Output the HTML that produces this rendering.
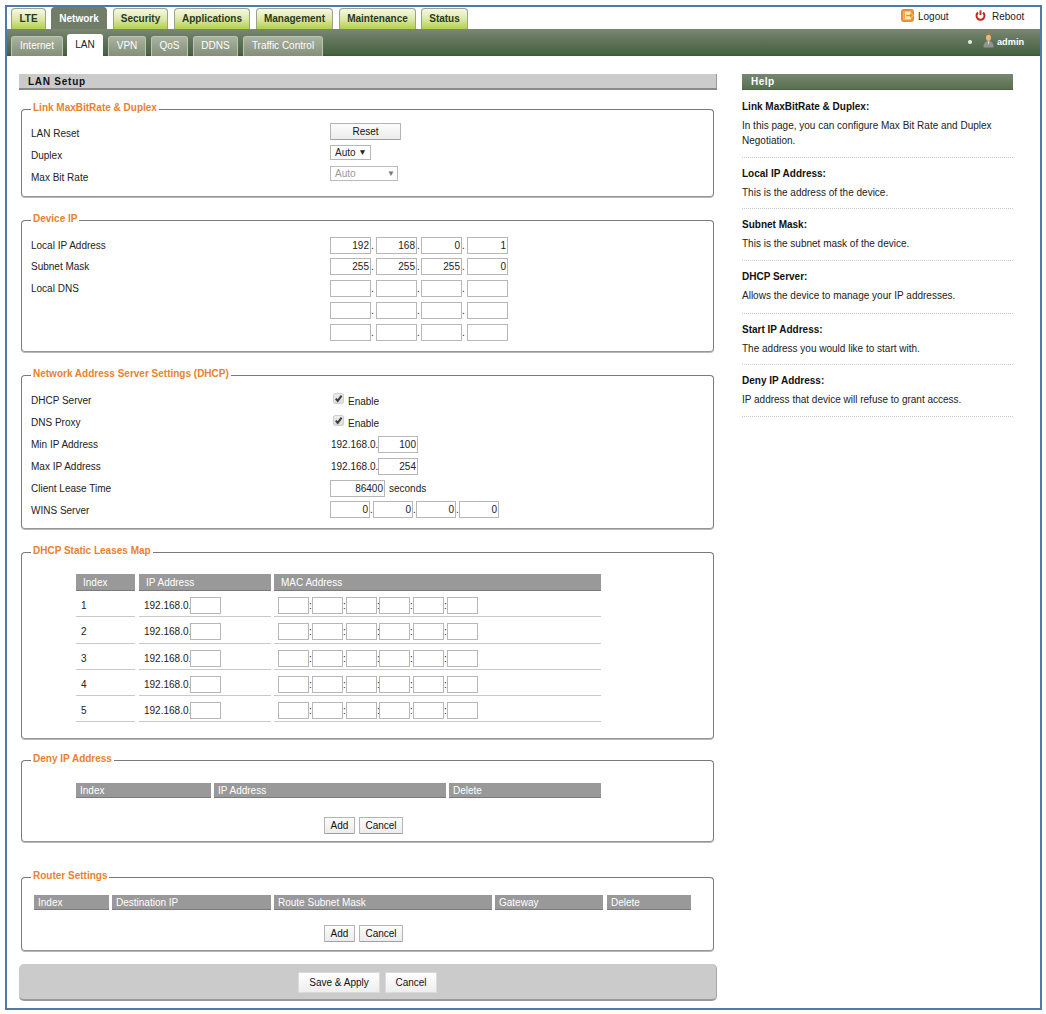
<!DOCTYPE html><html><head><meta charset="utf-8"><style>
*{box-sizing:border-box;margin:0;padding:0}
html,body{width:1046px;height:1014px;background:#fff;overflow:hidden}
body{position:relative;font-family:"Liberation Sans",sans-serif;font-size:10px;color:#222}
.a,.t,.tb,.lg,div{position:absolute}
.t{white-space:nowrap;line-height:12px;font-size:10px;color:#222}
.tb{white-space:nowrap;line-height:12px;font-size:10px;font-weight:bold;color:#222}
.lg{white-space:nowrap;line-height:12px;font-size:10px;font-weight:bold;color:#e8822e;background:#fff;padding:0 2px}
.frame{border:2px solid #4e79a8}
.tab{border:1px solid #98a38a;border-bottom:none;border-radius:4px 4px 0 0;background:linear-gradient(#f6f8e6,#dde8a8 50%,#b2cf48);font-weight:bold;color:#2a3a20;text-align:center;line-height:20px}
.tab.on{background:#717c69;border-color:#717c69;color:#fff}
.bar{background:linear-gradient(#7b8771,#5f7359 45%,#4a6444 90%,#3d5638)}
.stab{border:1px solid #bcc4b2;border-bottom:none;border-radius:3px 3px 0 0;background:linear-gradient(#aab3a0,#96a08c 50%,#84907c);color:#fff;text-align:center;line-height:17px}
.stab.on{background:#fff;color:#222;border-color:#fff}
.sec{background:#cbcbcb;border-bottom:2px solid #8a8a8a;border-right:1px solid #9a9a9a}
.help{background:linear-gradient(#778770,#57704f);border-bottom:1px solid #4d6048}
.fs{border:1px solid #7a7a7a;border-bottom-color:#959595;border-radius:4px;box-shadow:0 1px 0 #b8b8b8}
.in{border:1px solid #b7b7b7;background:#fff;text-align:right;padding-right:1px;line-height:14px;font-size:10px;color:#222}
.btn{border:1px solid #b4b4b4;border-bottom-color:#a0a0a0;border-radius:1px;background:linear-gradient(#fcfcfc,#ececec);text-align:center;font-size:10px;color:#111}
.th{background:#999;border-bottom:1px solid #7a7a7a;color:#fff;line-height:17px;padding-left:4px;white-space:nowrap}
.rl{height:1px;background:#c9c9c9}
.sep{height:1px;border-top:1px dotted #c8c8c8}
</style></head><body>
<div class="frame" style="left:5px;top:5px;width:1037px;height:1005px;"></div>
<div class="tab" style="left:11px;top:8px;width:35px;height:21px;">LTE</div>
<div class="tab on" style="left:51px;top:7px;width:56px;height:22px;line-height:21px">Network</div>
<div class="tab" style="left:113px;top:8px;width:55px;height:21px;">Security</div>
<div class="tab" style="left:174px;top:8px;width:76px;height:21px;">Applications</div>
<div class="tab" style="left:256px;top:8px;width:77px;height:21px;">Management</div>
<div class="tab" style="left:339px;top:8px;width:77px;height:21px;">Maintenance</div>
<div class="tab" style="left:421px;top:8px;width:47px;height:21px;">Status</div>
<div class="bar" style="left:7px;top:29px;width:1033px;height:27px;"></div>
<div class="stab" style="left:11px;top:36px;width:52px;height:20px;">Internet</div>
<div class="stab on" style="left:67px;top:34px;width:36px;height:22px;line-height:20px">LAN</div>
<div class="stab" style="left:108px;top:36px;width:38px;height:20px;">VPN</div>
<div class="stab" style="left:151px;top:36px;width:37px;height:20px;">QoS</div>
<div class="stab" style="left:193px;top:36px;width:45px;height:20px;">DDNS</div>
<div class="stab" style="left:243px;top:36px;width:80px;height:20px;">Traffic Control</div>
<svg style="position:absolute;left:901px;top:9px" width="13" height="13" viewBox="0 0 13 13"><rect x="0.5" y="0.5" width="12" height="12" rx="2" fill="#e9943c" stroke="#de8a34"/><rect x="2.5" y="2.5" width="7.5" height="8" fill="#fde8a8"/><rect x="2.5" y="2.5" width="1.5" height="8" fill="#f2a848"/><path d="M5 5.4h4V3.6l3.4 2.9L9 9.4V7.6H5z" fill="#f08a1c" stroke="#fde8a8" stroke-width="0.7"/></svg>
<span class="t" style="left:918px;top:11px;">Logout</span>
<svg style="position:absolute;left:975px;top:10px" width="11" height="11" viewBox="0 0 11 11"><path d="M3 2.6A4 4 0 1 0 8 2.6" stroke="#c4281d" stroke-width="2" fill="none"/><path d="M5.5 0.3v4.7" stroke="#c4281d" stroke-width="1.9"/></svg>
<span class="t" style="left:992px;top:11px;">Reboot</span>
<div style="left:968px;top:41px;width:4px;height:4px;border-radius:2px;background:#e8ece4;margin-top:-1px"></div>
<svg style="position:absolute;left:983px;top:33px" width="11" height="15" viewBox="0 0 11 15"><path d="M3 4.5C3 1.5 4 0.5 5.5 0.5S8 1.5 8 4.5C8 7 7 8 5.5 8S3 7 3 4.5z" fill="#e9b878"/><path d="M2.8 3.5C3 1 4.2 0.3 5.5 0.3S8 1 8.2 3.5C7.5 2.2 6.5 2 5.5 2S3.5 2.2 2.8 3.5z" fill="#a8703a"/><path d="M0.5 14.5C0.5 10 2 8.3 5.5 8.3S10.5 10 10.5 14.5z" fill="#8f948c"/><path d="M4.6 8.4l.9 3.6.9-3.6z" fill="#e8e8e0"/></svg>
<span class="tb" style="left:997px;top:36px;color:#fff;font-size:9.2px">admin</span>
<div class="sec" style="left:19px;top:74px;width:698px;height:16px;"></div>
<span class="tb" style="left:28px;top:76px;font-size:10px;letter-spacing:0.75px;color:#111">LAN Setup</span>
<div class="help" style="left:742px;top:74px;width:271px;height:16px;"></div>
<span class="tb" style="left:751px;top:76px;color:#fff;letter-spacing:0.5px">Help</span>
<div class="fs" style="left:21px;top:109px;width:693px;height:88px;"></div>
<span class="lg" style="left:31px;top:102px;">Link MaxBitRate &amp; Duplex</span>
<div class="fs" style="left:21px;top:220px;width:693px;height:132px;"></div>
<span class="lg" style="left:31px;top:213px;">Device IP</span>
<div class="fs" style="left:21px;top:375px;width:693px;height:154px;"></div>
<span class="lg" style="left:31px;top:368px;">Network Address Server Settings (DHCP)</span>
<div class="fs" style="left:21px;top:552px;width:693px;height:187px;"></div>
<span class="lg" style="left:31px;top:545px;">DHCP Static Leases Map</span>
<div class="fs" style="left:21px;top:760px;width:693px;height:82px;"></div>
<span class="lg" style="left:31px;top:753px;">Deny IP Address</span>
<div class="fs" style="left:21px;top:877px;width:693px;height:74px;"></div>
<span class="lg" style="left:31px;top:870px;">Router Settings</span>
<span class="t" style="left:31px;top:128px;">LAN Reset</span>
<span class="t" style="left:31px;top:150px;">Duplex</span>
<span class="t" style="left:31px;top:172px;">Max Bit Rate</span>
<div class="btn" style="left:330px;top:123px;width:71px;height:17px;line-height:15px">Reset</div>
<div class="in" style="left:330px;top:145px;width:41px;height:15px;text-align:left;padding-left:4px;line-height:13px">Auto <span style="font-size:8.5px;position:relative;top:-1px">&#9660;</span></div>
<div class="in" style="left:330px;top:166px;width:68px;height:15px;text-align:left;padding-left:4px;line-height:13px;color:#999;border-color:#bbb">Auto<span style="position:absolute;left:56px;top:0;font-size:8px;color:#777">&#9660;</span></div>
<span class="t" style="left:31px;top:240px;">Local IP Address</span>
<span class="t" style="left:31px;top:261px;">Subnet Mask</span>
<span class="t" style="left:31px;top:283px;">Local DNS</span>
<div class="in" style="left:330px;top:237px;width:41px;height:17px;line-height:15px">192</div>
<span class="t" style="left:371px;top:240px;">.</span>
<div class="in" style="left:376px;top:237px;width:41px;height:17px;line-height:15px">168</div>
<span class="t" style="left:417px;top:240px;">.</span>
<div class="in" style="left:421px;top:237px;width:41px;height:17px;line-height:15px">0</div>
<span class="t" style="left:462px;top:240px;">.</span>
<div class="in" style="left:467px;top:237px;width:41px;height:17px;line-height:15px">1</div>
<div class="in" style="left:330px;top:258px;width:41px;height:17px;line-height:15px">255</div>
<span class="t" style="left:371px;top:261px;">.</span>
<div class="in" style="left:376px;top:258px;width:41px;height:17px;line-height:15px">255</div>
<span class="t" style="left:417px;top:261px;">.</span>
<div class="in" style="left:421px;top:258px;width:41px;height:17px;line-height:15px">255</div>
<span class="t" style="left:462px;top:261px;">.</span>
<div class="in" style="left:467px;top:258px;width:41px;height:17px;line-height:15px">0</div>
<div class="in" style="left:330px;top:280px;width:41px;height:17px;line-height:15px"></div>
<span class="t" style="left:371px;top:283px;">.</span>
<div class="in" style="left:376px;top:280px;width:41px;height:17px;line-height:15px"></div>
<span class="t" style="left:417px;top:283px;">.</span>
<div class="in" style="left:421px;top:280px;width:41px;height:17px;line-height:15px"></div>
<span class="t" style="left:462px;top:283px;">.</span>
<div class="in" style="left:467px;top:280px;width:41px;height:17px;line-height:15px"></div>
<div class="in" style="left:330px;top:302px;width:41px;height:17px;line-height:15px"></div>
<span class="t" style="left:371px;top:305px;">.</span>
<div class="in" style="left:376px;top:302px;width:41px;height:17px;line-height:15px"></div>
<span class="t" style="left:417px;top:305px;">.</span>
<div class="in" style="left:421px;top:302px;width:41px;height:17px;line-height:15px"></div>
<span class="t" style="left:462px;top:305px;">.</span>
<div class="in" style="left:467px;top:302px;width:41px;height:17px;line-height:15px"></div>
<div class="in" style="left:330px;top:324px;width:41px;height:17px;line-height:15px"></div>
<span class="t" style="left:371px;top:327px;">.</span>
<div class="in" style="left:376px;top:324px;width:41px;height:17px;line-height:15px"></div>
<span class="t" style="left:417px;top:327px;">.</span>
<div class="in" style="left:421px;top:324px;width:41px;height:17px;line-height:15px"></div>
<span class="t" style="left:462px;top:327px;">.</span>
<div class="in" style="left:467px;top:324px;width:41px;height:17px;line-height:15px"></div>
<span class="t" style="left:31px;top:395px;">DHCP Server</span>
<span class="t" style="left:31px;top:417px;">DNS Proxy</span>
<span class="t" style="left:31px;top:439px;">Min IP Address</span>
<span class="t" style="left:31px;top:461px;">Max IP Address</span>
<span class="t" style="left:31px;top:483px;">Client Lease Time</span>
<span class="t" style="left:31px;top:505px;">WINS Server</span>
<div style="left:333px;top:393px;width:11px;height:11px;border:1px solid #d0d0d0;border-radius:2px;background:linear-gradient(#ececec,#dcdcdc)"><svg style="position:absolute;left:0;top:0" width="9" height="9" viewBox="0 0 9 9"><path d="M1.8 4.6l1.9 2.2L7.6 1.6" stroke="#3c3c3c" stroke-width="2" fill="none"/></svg></div>
<span class="t" style="left:348px;top:395.5px;">Enable</span>
<div style="left:333px;top:415px;width:11px;height:11px;border:1px solid #d0d0d0;border-radius:2px;background:linear-gradient(#ececec,#dcdcdc)"><svg style="position:absolute;left:0;top:0" width="9" height="9" viewBox="0 0 9 9"><path d="M1.8 4.6l1.9 2.2L7.6 1.6" stroke="#3c3c3c" stroke-width="2" fill="none"/></svg></div>
<span class="t" style="left:348px;top:417.5px;">Enable</span>
<span class="t" style="left:331px;top:439px;">192.168.0.</span>
<div class="in" style="left:378px;top:436px;width:40px;height:17px;line-height:15px">100</div>
<span class="t" style="left:331px;top:461px;">192.168.0.</span>
<div class="in" style="left:378px;top:458px;width:40px;height:17px;line-height:15px">254</div>
<div class="in" style="left:330px;top:480px;width:55px;height:17px;line-height:15px">86400</div>
<span class="t" style="left:389px;top:482.5px;">seconds</span>
<div class="in" style="left:330px;top:501px;width:40px;height:17px;line-height:15px">0</div>
<span class="t" style="left:370px;top:504px;">.</span>
<div class="in" style="left:373px;top:501px;width:40px;height:17px;line-height:15px">0</div>
<span class="t" style="left:413px;top:504px;">.</span>
<div class="in" style="left:416px;top:501px;width:40px;height:17px;line-height:15px">0</div>
<span class="t" style="left:456px;top:504px;">.</span>
<div class="in" style="left:459px;top:501px;width:40px;height:17px;line-height:15px">0</div>
<div class="th" style="left:76px;top:574px;width:59px;height:17px;padding-left:7px">Index</div>
<div class="th" style="left:139px;top:574px;width:132px;height:17px;padding-left:7px">IP Address</div>
<div class="th" style="left:274px;top:574px;width:327px;height:17px;padding-left:7px">MAC Address</div>
<div class="rl" style="left:76px;top:616px;width:59px"></div>
<div class="rl" style="left:139px;top:616px;width:132px"></div>
<div class="rl" style="left:274px;top:616px;width:327px"></div>
<span class="t" style="left:81px;top:600px;">1</span>
<span class="t" style="left:144px;top:600px;">192.168.0.</span>
<div class="in" style="left:190px;top:597px;width:31px;height:17px;"></div>
<div class="in" style="left:278px;top:597px;width:31px;height:17px;"></div>
<span class="t" style="left:309px;top:600px;">:</span>
<div class="in" style="left:312px;top:597px;width:31px;height:17px;"></div>
<span class="t" style="left:343px;top:600px;">:</span>
<div class="in" style="left:346px;top:597px;width:31px;height:17px;"></div>
<span class="t" style="left:377px;top:600px;">:</span>
<div class="in" style="left:379px;top:597px;width:31px;height:17px;"></div>
<span class="t" style="left:410px;top:600px;">:</span>
<div class="in" style="left:413px;top:597px;width:31px;height:17px;"></div>
<span class="t" style="left:444px;top:600px;">:</span>
<div class="in" style="left:447px;top:597px;width:31px;height:17px;"></div>
<div class="rl" style="left:76px;top:643px;width:59px"></div>
<div class="rl" style="left:139px;top:643px;width:132px"></div>
<div class="rl" style="left:274px;top:643px;width:327px"></div>
<span class="t" style="left:81px;top:626px;">2</span>
<span class="t" style="left:144px;top:626px;">192.168.0.</span>
<div class="in" style="left:190px;top:623px;width:31px;height:17px;"></div>
<div class="in" style="left:278px;top:623px;width:31px;height:17px;"></div>
<span class="t" style="left:309px;top:626px;">:</span>
<div class="in" style="left:312px;top:623px;width:31px;height:17px;"></div>
<span class="t" style="left:343px;top:626px;">:</span>
<div class="in" style="left:346px;top:623px;width:31px;height:17px;"></div>
<span class="t" style="left:377px;top:626px;">:</span>
<div class="in" style="left:379px;top:623px;width:31px;height:17px;"></div>
<span class="t" style="left:410px;top:626px;">:</span>
<div class="in" style="left:413px;top:623px;width:31px;height:17px;"></div>
<span class="t" style="left:444px;top:626px;">:</span>
<div class="in" style="left:447px;top:623px;width:31px;height:17px;"></div>
<div class="rl" style="left:76px;top:669px;width:59px"></div>
<div class="rl" style="left:139px;top:669px;width:132px"></div>
<div class="rl" style="left:274px;top:669px;width:327px"></div>
<span class="t" style="left:81px;top:653px;">3</span>
<span class="t" style="left:144px;top:653px;">192.168.0.</span>
<div class="in" style="left:190px;top:650px;width:31px;height:17px;"></div>
<div class="in" style="left:278px;top:650px;width:31px;height:17px;"></div>
<span class="t" style="left:309px;top:653px;">:</span>
<div class="in" style="left:312px;top:650px;width:31px;height:17px;"></div>
<span class="t" style="left:343px;top:653px;">:</span>
<div class="in" style="left:346px;top:650px;width:31px;height:17px;"></div>
<span class="t" style="left:377px;top:653px;">:</span>
<div class="in" style="left:379px;top:650px;width:31px;height:17px;"></div>
<span class="t" style="left:410px;top:653px;">:</span>
<div class="in" style="left:413px;top:650px;width:31px;height:17px;"></div>
<span class="t" style="left:444px;top:653px;">:</span>
<div class="in" style="left:447px;top:650px;width:31px;height:17px;"></div>
<div class="rl" style="left:76px;top:695px;width:59px"></div>
<div class="rl" style="left:139px;top:695px;width:132px"></div>
<div class="rl" style="left:274px;top:695px;width:327px"></div>
<span class="t" style="left:81px;top:679px;">4</span>
<span class="t" style="left:144px;top:679px;">192.168.0.</span>
<div class="in" style="left:190px;top:676px;width:31px;height:17px;"></div>
<div class="in" style="left:278px;top:676px;width:31px;height:17px;"></div>
<span class="t" style="left:309px;top:679px;">:</span>
<div class="in" style="left:312px;top:676px;width:31px;height:17px;"></div>
<span class="t" style="left:343px;top:679px;">:</span>
<div class="in" style="left:346px;top:676px;width:31px;height:17px;"></div>
<span class="t" style="left:377px;top:679px;">:</span>
<div class="in" style="left:379px;top:676px;width:31px;height:17px;"></div>
<span class="t" style="left:410px;top:679px;">:</span>
<div class="in" style="left:413px;top:676px;width:31px;height:17px;"></div>
<span class="t" style="left:444px;top:679px;">:</span>
<div class="in" style="left:447px;top:676px;width:31px;height:17px;"></div>
<div class="rl" style="left:76px;top:721px;width:59px"></div>
<div class="rl" style="left:139px;top:721px;width:132px"></div>
<div class="rl" style="left:274px;top:721px;width:327px"></div>
<span class="t" style="left:81px;top:705px;">5</span>
<span class="t" style="left:144px;top:705px;">192.168.0.</span>
<div class="in" style="left:190px;top:702px;width:31px;height:17px;"></div>
<div class="in" style="left:278px;top:702px;width:31px;height:17px;"></div>
<span class="t" style="left:309px;top:705px;">:</span>
<div class="in" style="left:312px;top:702px;width:31px;height:17px;"></div>
<span class="t" style="left:343px;top:705px;">:</span>
<div class="in" style="left:346px;top:702px;width:31px;height:17px;"></div>
<span class="t" style="left:377px;top:705px;">:</span>
<div class="in" style="left:379px;top:702px;width:31px;height:17px;"></div>
<span class="t" style="left:410px;top:705px;">:</span>
<div class="in" style="left:413px;top:702px;width:31px;height:17px;"></div>
<span class="t" style="left:444px;top:705px;">:</span>
<div class="in" style="left:447px;top:702px;width:31px;height:17px;"></div>
<div class="th" style="left:76px;top:783px;width:135px;height:15px;line-height:16px">Index</div>
<div class="th" style="left:214px;top:783px;width:232px;height:15px;line-height:16px">IP Address</div>
<div class="th" style="left:449px;top:783px;width:152px;height:15px;line-height:16px">Delete</div>
<div class="btn" style="left:324px;top:817px;width:31px;height:17px;line-height:15px">Add</div>
<div class="btn" style="left:359px;top:817px;width:44px;height:17px;line-height:15px">Cancel</div>
<div class="th" style="left:34px;top:895px;width:75px;height:15px;line-height:16px">Index</div>
<div class="th" style="left:112px;top:895px;width:159px;height:15px;line-height:16px">Destination IP</div>
<div class="th" style="left:274px;top:895px;width:218px;height:15px;line-height:16px">Route Subnet Mask</div>
<div class="th" style="left:495px;top:895px;width:108px;height:15px;line-height:16px">Gateway</div>
<div class="th" style="left:607px;top:895px;width:84px;height:15px;line-height:16px">Delete</div>
<div class="btn" style="left:324px;top:925px;width:31px;height:17px;line-height:15px">Add</div>
<div class="btn" style="left:359px;top:925px;width:44px;height:17px;line-height:15px">Cancel</div>
<div style="left:19px;top:964px;width:698px;height:37px;background:#cbcbcb;border-radius:5px;border-bottom:2px solid #9a9a9a;border-right:1px solid #a5a5a5"></div>
<div class="btn" style="left:298px;top:972px;width:82px;height:21px;line-height:19px;border-color:#dadada;border-radius:0;background:linear-gradient(#fff,#eee)">Save &amp; Apply</div>
<div class="btn" style="left:385px;top:972px;width:52px;height:21px;line-height:19px;border-color:#dadada;border-radius:0;background:linear-gradient(#fff,#eee)">Cancel</div>
<span class="tb" style="left:742px;top:101px;color:#111">Link MaxBitRate &amp; Duplex:</span>
<span class="t" style="left:742px;top:120px;">In this page, you can configure Max Bit Rate and Duplex</span>
<span class="t" style="left:742px;top:135px;">Negotiation.</span>
<div class="sep" style="left:742px;top:157px;width:271px"></div>
<span class="tb" style="left:742px;top:168px;color:#111">Local IP Address:</span>
<span class="t" style="left:742px;top:187px;">This is the address of the device.</span>
<div class="sep" style="left:742px;top:208px;width:271px"></div>
<span class="tb" style="left:742px;top:219px;color:#111">Subnet Mask:</span>
<span class="t" style="left:742px;top:238px;">This is the subnet mask of the device.</span>
<div class="sep" style="left:742px;top:260px;width:271px"></div>
<span class="tb" style="left:742px;top:271px;color:#111">DHCP Server:</span>
<span class="t" style="left:742px;top:290px;">Allows the device to manage your IP addresses.</span>
<div class="sep" style="left:742px;top:313px;width:271px"></div>
<span class="tb" style="left:742px;top:324px;color:#111">Start IP Address:</span>
<span class="t" style="left:742px;top:343px;">The address you would like to start with.</span>
<div class="sep" style="left:742px;top:364px;width:271px"></div>
<span class="tb" style="left:742px;top:375px;color:#111">Deny IP Address:</span>
<span class="t" style="left:742px;top:394px;">IP address that device will refuse to grant access.</span>
<div class="sep" style="left:742px;top:416px;width:271px"></div>
</body></html>
